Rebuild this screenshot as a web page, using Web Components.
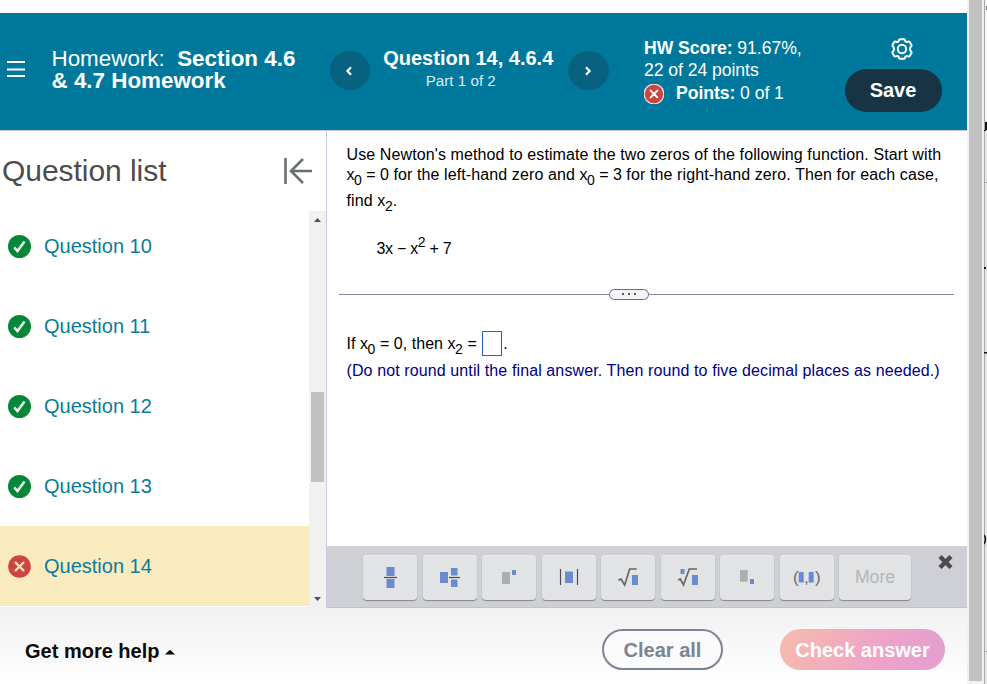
<!DOCTYPE html>
<html lang="en">
<head>
<meta charset="utf-8">
<title>Section 4.6 &amp; 4.7 Homework</title>
<style>
    body {
        margin: 0;
        background: #fff;
        font-family: "Liberation Sans", Arial, sans-serif;
        color: #000;
        overflow: hidden;
    }
</style>
</head>
<body>
<homework-player></homework-player>

<script>
/**
 * Base class: clones the static `markup` of the subclass into an open shadow
 * root.
 */
class BaseElement extends HTMLElement {
    constructor() {
        super();

        const template = document.createElement("template");
        template.innerHTML = this.constructor.markup;

        this.attachShadow({mode: "open"});
        this.shadowRoot.appendChild(template.content.cloneNode(true));
    }
}

/**
 * Round status mark, state="correct" or state="wrong".
 */
class StatusMark extends BaseElement {
    static get markup() {
        return `
            <style>
                :host { display: block; width: 23px; height: 23px; flex: none; }
                svg { display: block; width: 100%; height: 100%; }
                .wrong, :host([state="wrong"]) .correct { display: none; }
                :host([state="wrong"]) .wrong { display: inline; }
                .wrong circle { stroke: var(--mark-ring, none); stroke-width: 1.4; }
            </style>
            <svg viewBox="0 0 23 23" fill="none">
                <g class="correct">
                    <circle cx="11.5" cy="11.5" r="11.5" fill="#058638"/>
                    <path d="M6.2 12.4l3.3 3.6 7-9.6" stroke="#e9f5ec" stroke-width="2.5"/>
                </g>
                <g class="wrong">
                    <circle cx="11.5" cy="11.5" r="11.3" fill="#cb4541"/>
                    <path d="M7.6 7.6l7.8 7.8M15.4 7.6l-7.8 7.8" stroke="var(--mark-cross, #f9dcb5)" stroke-width="2.3" stroke-linecap="round"/>
                </g>
            </svg>
        `;
    }
}

/**
 * Round previous / next button in the header.
 */
class NavArrow extends BaseElement {
    static get markup() {
        return `
            <style>
                :host {
                    display: flex;
                    align-items: center;
                    justify-content: center;
                    width: 40.5px;
                    height: 39px;
                    border-radius: 50%;
                    background: #08627f;
                }
                :host([direction="next"]) svg { transform: scaleX(-1); }
                svg { margin: 0 1px 0 0; }
            </style>
            <svg width="10" height="12" viewBox="0 0 10 12" fill="none">
                <path d="M7 2.2L3.4 6 7 9.8" stroke="#fff" stroke-width="2.2"/>
            </svg>
        `;
    }
}

/**
 * Rounded action button, variant="dark", "outline" or "gradient".
 */
class PillButton extends BaseElement {
    static get markup() {
        return `
            <style>
                :host {
                    display: flex;
                    align-items: center;
                    justify-content: center;
                    box-sizing: border-box;
                    height: 41px;
                    border-radius: 22px;
                    font-size: 20px;
                    font-weight: bold;
                    line-height: 24px;
                    white-space: nowrap;
                }
                :host([variant="dark"]) { width: 97px; height: 43px; padding-bottom: 2px; background: #183343; color: #fff; }
                :host([variant="outline"]) { width: 121px; border: 2px solid #7c8493; color: #7c8493; background: #fbfbfb; }
                :host([variant="gradient"]) {
                    width: 165px;
                    color: #fff;
                    background: linear-gradient(115deg, #f4b9b0 8%, #efa2c8 62%, #e5a0cd 85%);
                }
            </style>
            <slot></slot>
        `;
    }
}

class PlayerHeader extends BaseElement {
    static get markup() {
        return `
            <style>
                :host {
                    display: grid;
                    grid-template-columns: 52px 277.5px 279.5px 35px 200px 1fr;
                    height: 117px;
                    background: #00789b;
                    border-bottom: 1px solid #c7cbdc;
                    color: #fff;
                }
                .menu { padding: 47px 0 0 6px; }
                svg { display: block; }
                .title { padding-top: 35px; font-size: 22.4px; line-height: 22px; white-space: nowrap; }
                .title div { margin-left: -0.5px; }
                .nav { display: flex; justify-content: space-between; padding-top: 38px; height: 39px; }
                .current { text-align: center; margin: -4px 2px 0 0; white-space: nowrap; }
                .current b { display: block; font-size: 20px; line-height: 22px; }
                .current span { display: block; margin: 1px 15px 0 0; font-size: 15.2px; line-height: 22px; color: #d9edf3; }
                .score { padding-top: 24px; font-size: 17.6px; line-height: 22px; letter-spacing: -0.05px; white-space: nowrap; }
                .points { display: flex; align-items: center; height: 24px; }
                .points status-mark {
                    width: 20px;
                    height: 20px;
                    margin: 1px 12px 0 0;
                    --mark-ring: #f3dedd;
                    --mark-cross: #fff;
                }
                .actions { display: flex; flex-direction: column; align-items: center; padding: 24px 25px 0 0; }
                .actions svg { margin-left: 17px; }
                .actions pill-button { margin-top: 8px; }
            </style>
            <div class="menu">
                <svg width="20" height="18" fill="#fff">
                    <path d="M1 1h18v2H1zM1 8.5h18v2H1zM1 15h18v2H1z"/>
                </svg>
            </div>
            <div class="title">
                <div>Homework:&nbsp; <b>Section 4.6</b></div>
                <div><b>&amp; 4.7 Homework</b></div>
            </div>
            <div class="nav">
                <nav-arrow direction="prev"></nav-arrow>
                <div class="current"><b>Question 14, 4.6.4</b><span>Part 1 of 2</span></div>
                <nav-arrow direction="next"></nav-arrow>
            </div>
            <div></div>
            <div class="score">
                <div><b>HW Score:</b> 91.67%,</div>
                <div>22 of 24 points</div>
                <div class="points"><status-mark state="wrong"></status-mark><div><b>Points:</b> 0 of 1</div></div>
            </div>
            <div class="actions">
                <svg width="24" height="24" viewBox="0 0 24 24" fill="none" stroke="#fff" stroke-width="2" stroke-linejoin="round">
                    <path d="M9.9 2.2H14.1Q15.2 2.6 15.3 4.3Q16.6 5.6 18.2 4.6Q19.3 4.4 19.9 5.2L21.5 8.1Q21.9 9.2 20.4 10.2Q19.6 12 20.4 13.8Q21.9 14.8 21.5 15.9L19.9 18.8Q19.3 19.6 18.2 19.4Q16.6 18.4 15.3 19.7Q15.2 21.4 14.1 21.8H9.9Q8.8 21.4 8.7 19.7Q7.4 18.4 5.8 19.4Q4.7 19.6 4.1 18.8L2.5 15.9Q2.1 14.8 3.6 13.8Q4.4 12 3.6 10.2Q2.1 9.2 2.5 8.1L4.1 5.2Q4.7 4.4 5.8 4.6Q7.4 5.6 8.7 4.3Q8.8 2.6 9.9 2.2Z"/>
                    <circle cx="12" cy="12" r="4.2"/>
                </svg>
                <pill-button variant="dark">Save</pill-button>
            </div>
        `;
    }
}

/**
 * One row of the question list.
 */
class QuestionItem extends BaseElement {
    static get markup() {
        return `
            <style>
                :host {
                    display: flex;
                    align-items: center;
                    gap: 13px;
                    box-sizing: border-box;
                    height: 80px;
                    padding-left: 8px;
                    font-size: 20px;
                    line-height: 24px;
                    color: #0d7a9c;
                }
                :host([state="wrong"]) { background: #f9ebbd; }
            </style>
            <status-mark></status-mark>
            <slot></slot>
        `;
    }

    connectedCallback() {
        this.shadowRoot.querySelector("status-mark").setAttribute("state", this.getAttribute("state"));
    }
}

class QuestionList extends BaseElement {
    static get markup() {
        return `
            <style>
                :host { display: flex; flex-direction: column; background: #fff; border-right: 1px solid #c7cbdc; }
                .head {
                    display: flex;
                    justify-content: space-between;
                    box-sizing: border-box;
                    height: 80px;
                    padding: 23px 13px 0 2px;
                    font-size: 30px;
                    line-height: 34px;
                    letter-spacing: -0.05px;
                    color: #4c4c4c;
                }
                .head svg { margin-top: 2px; }
                .body { display: flex; height: 396px; }
                .rows { flex: 1; overflow: hidden; }
                .rows > div { margin-top: -5px; }
                .bar {
                    display: flex;
                    flex-direction: column;
                    align-items: center;
                    width: 17px;
                    background: #f1f1f1;
                }
                .thumb { width: 13px; height: 90px; margin-top: 164px; background: #c1c1c1; }
                .arrow { height: 17px; }
            </style>
            <div class="head">
                <span>Question list</span>
                <svg width="30" height="30" viewBox="0 0 30 30" fill="none" stroke="#6a7070" stroke-width="2.6">
                    <path d="M2.5 2v26M29 15H8M20 3L8 15l12 12"/>
                </svg>
            </div>
            <div class="body">
                <div class="rows"><div>
                    <question-item state="correct">Question 10</question-item>
                    <question-item state="correct">Question 11</question-item>
                    <question-item state="correct">Question 12</question-item>
                    <question-item state="correct">Question 13</question-item>
                    <question-item state="wrong">Question 14</question-item>
                </div></div>
                <div class="bar">
                    <svg class="arrow" width="17" height="17"><path d="M5 11l3.5-4 3.5 4z" fill="#505050"/></svg>
                    <div class="thumb"></div>
                    <svg class="arrow" width="17" height="17" style="margin-top: auto"><path d="M5 7l3.5 4L12 7z" fill="#505050"/></svg>
                </div>
            </div>
        `;
    }
}

/**
 * The text of the exercise with its answer box.
 */
class ExerciseBody extends BaseElement {
    static get markup() {
        return `
            <style>
                :host { display: block; height: 415px; background: #fff; font-size: 16px; white-space: nowrap; }
                .text { padding: 14px 0 0 19.5px; }
                .line { height: 20px; line-height: 20px; }
                .prose { letter-spacing: 0.11px; }
                sub, sup { font-size: 14px; line-height: 0; vertical-align: baseline; position: relative; }
                sub { top: 4.5px; margin-left: -0.5px; }
                sup { top: -7px; }
                .formula { margin: 28px 0 0 30px; letter-spacing: -0.3px; }
                .divider { display: flex; align-items: center; height: 12px; margin: 29px 13px 0 12px; }
                .divider::before, .divider::after { content: ""; height: 1px; background: #8289a3; }
                .divider::before { width: 270px; }
                .divider::after { flex: 1; }
                .more {
                    display: flex;
                    align-items: center;
                    justify-content: center;
                    gap: 4px;
                    box-sizing: border-box;
                    width: 40px;
                    height: 11px;
                    border: 1px solid #626b7b;
                    border-radius: 6px;
                    background: #f5f5f8;
                }
                .more i { width: 2px; height: 2px; background: #555; }
                .answer { display: flex; align-items: center; height: 26px; }
                .answer > span:first-child { padding-top: 2px; letter-spacing: 0.05px; }
                .box { box-sizing: border-box; width: 20px; height: 25px; margin: 1px 1px 0 5.5px; border: 1px solid #2a60c8; }
                .dot { padding-top: 2px; }
                .hint { margin-top: 5px; color: #000080; }
            </style>
            <div class="text">
                <div class="line prose">Use Newton's method to estimate the two zeros of the following function. Start with</div>
                <div class="line">x<sub>0</sub> = 0 <span class="prose">for the left-hand zero and</span> x<sub>0</sub> = 3 <span class="prose">for the right-hand zero. Then for each case,</span></div>
                <div class="line prose" style="margin-top: 6px">find x<sub>2</sub>.</div>
                <div class="line formula">3x &minus; x<sup>2</sup> + 7</div>
            </div>
            <div class="divider"><div class="more"><i></i><i></i><i></i></div></div>
            <div class="text" style="padding-top: 30px">
                <div class="answer"><span>If x<sub>0</sub> = 0, then x<sub>2</sub> =</span><span class="box"></span><span class="dot">.</span></div>
                <div class="line hint prose">(Do not round until the final answer. Then round to five decimal places as needed.)</div>
            </div>
        `;
    }
}

/**
 * Math palette key, its icon or label is slotted.
 */
class MathKey extends BaseElement {
    static get markup() {
        return `
            <style>
                :host {
                    display: flex;
                    align-items: center;
                    justify-content: center;
                    width: 54px;
                    height: 45px;
                    border-radius: 4px;
                    background: #e2e3e5;
                    box-shadow: 0 1px 1px #85868a, inset 0 1px 1px #ededef;
                    font-size: 17.6px;
                    color: #b4b6ba;
                }
                :host([wide]) { width: 72px; }
            </style>
            <slot></slot>
        `;
    }
}

class MathPalette extends BaseElement {
    static get markup() {
        return `
            <style>
                :host {
                    display: flex;
                    gap: 5.5px;
                    box-sizing: border-box;
                    height: 62px;
                    padding: 9px 13px 0 36px;
                    background: #cfd0d6;
                    border-bottom: 1px solid #bfc2cb;
                }
                svg { display: block; }
                .b { fill: #698cd1; }
                .g { fill: #adaeb0; }
                .s { fill: none; stroke: #4c4c4c; stroke-width: 1.2; }
                .root { fill: none; stroke: #666; stroke-width: 1.7; }
                .close { margin-left: auto; }
            </style>
            <math-key><svg width="54" height="45"><path class="b" d="M23.5 12h8v9h-8zM23.5 24h8v9h-8z"/><path class="s" d="M21 22.5h13"/></svg></math-key>
            <math-key><svg width="54" height="45"><path class="b" d="M17 17h8v11h-8zM28 13h6.5v7.5H28zM28 24.5h6.5V32H28z"/><path class="s" d="M26 22.5h11"/></svg></math-key>
            <math-key><svg width="54" height="45"><path class="g" d="M20 17h8v12h-8z"/><path class="b" d="M30 15h4v5h-4z"/></svg></math-key>
            <math-key><svg width="54" height="45"><path class="b" d="M23 16.500h8V28h-8z"/><path class="s" d="M18.500 14v16M35.500 14v16"/></svg></math-key>
            <math-key><svg width="54" height="45"><path class="b" d="M31 20h6v10h-6z"/><path class="root" d="M17.3 25.3l2.7-1.3 3.7 6 5-16h7"/></svg></math-key>
            <math-key><svg width="54" height="45"><path class="b" d="M31 20h6v10h-6zM19.5 14h4v5h-4z"/><path class="root" d="M17 25l2.3-1 3.2 6 5.8-16H36"/></svg></math-key>
            <math-key><svg width="54" height="45"><path class="g" d="M20 15h7.7v11.7H20z"/><path class="b" d="M30 24h4v5h-4z"/></svg></math-key>
            <math-key><svg width="54" height="45" font-size="17" fill="#6c6c6c"><text x="13" y="27.5">(</text><text x="24" y="28">,</text><text x="35" y="27.5">)</text><path class="b" d="M18.700 17h5v10.500h-5zM28.700 17h5v10.500h-5z"/></svg></math-key>
            <math-key wide>More</math-key>
            <svg class="close" width="17" height="14" viewBox="0 0 17 14"><path d="M3 1.5l11 11M14 1.5l-11 11" stroke="#4b4b4d" stroke-width="4.4"/></svg>
        `;
    }
}

class PlayerFooter extends BaseElement {
    static get markup() {
        return `
            <style>
                :host {
                    display: flex;
                    box-sizing: border-box;
                    padding: 21px 22px 0 25px;
                    background: linear-gradient(#f1f1f1, #fff);
                }
                .help {
                    display: flex;
                    align-items: center;
                    gap: 6px;
                    height: 44px;
                    margin-right: auto;
                    font-size: 20px;
                    font-weight: bold;
                    color: #0b0b0b;
                }
                .help svg { margin-top: 2px; }
                pill-button[variant="gradient"] { margin-left: 57px; }
            </style>
            <div class="help">Get more help <svg width="10" height="6"><path d="M0 5.5L5 .8l5 4.7z"/></svg></div>
            <pill-button variant="outline">Clear all</pill-button>
            <pill-button variant="gradient">Check answer</pill-button>
        `;
    }
}

/**
 * Scrollbar of the window, with the edge of the window that lies behind it.
 */
class WindowEdge extends BaseElement {
    static get markup() {
        return `
            <style>
                :host { display: flex; background: #f1f1f1; }
                .thumb { width: 13px; height: 681px; margin-left: 2px; background: #c1c1c1; }
                svg { display: block; margin-left: 2px; }
            </style>
            <div class="thumb"></div>
            <svg width="3" height="684">
                <path fill="#e6e6e6" d="M0 0h3v684H0z"/>
                <path fill="#f6f6f6" d="M1 0h2v120H1z"/>
                <path fill="#a9a9a9" d="M0 0h1v684H0zM0 182h3v1H0zM0 651h3v1H0z"/>
                <path fill="#777" d="M2 6h1v4H2z"/>
                <path fill="#111" d="M1 122h2v8H1zM0 130h2v1H0zM0 267h2v2H0zM0 352h3v1.5H0z"/>
                <path fill="none" stroke="#111" stroke-width="1.5" d="M0 535q3 4 0 9"/>
            </svg>
        `;
    }
}

class HomeworkPlayer extends BaseElement {
    static get markup() {
        return `
            <style>
                :host { display: grid; grid-template-columns: 967px 20px; width: 987px; height: 684px; }
                main { display: grid; grid-template-rows: 118px 477px 1fr; padding-top: 13px; }
                .work { display: grid; grid-template-columns: 327px 640px; background: #f1f1f1; }
                question-list { height: 476px; }
            </style>
            <main>
                <player-header></player-header>
                <div class="work">
                    <question-list></question-list>
                    <div>
                        <exercise-body></exercise-body>
                        <math-palette></math-palette>
                    </div>
                </div>
                <player-footer></player-footer>
            </main>
            <window-edge></window-edge>
        `;
    }
}

customElements.define("status-mark", StatusMark);
customElements.define("nav-arrow", NavArrow);
customElements.define("pill-button", PillButton);
customElements.define("player-header", PlayerHeader);
customElements.define("question-item", QuestionItem);
customElements.define("question-list", QuestionList);
customElements.define("exercise-body", ExerciseBody);
customElements.define("math-key", MathKey);
customElements.define("math-palette", MathPalette);
customElements.define("player-footer", PlayerFooter);
customElements.define("window-edge", WindowEdge);
customElements.define("homework-player", HomeworkPlayer);
</script>
</body>
</html>
